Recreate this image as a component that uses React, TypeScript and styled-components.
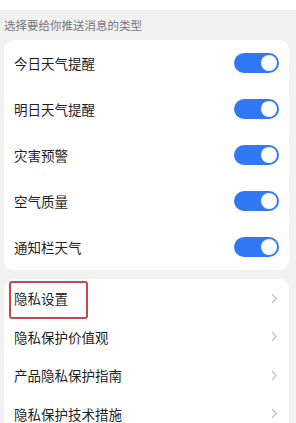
import React, { useState } from "react";
import styled, { createGlobalStyle } from "styled-components";

const GlobalStyle = createGlobalStyle`
  html, body {
    margin: 0;
    padding: 0;
    background: #f1f1f1;
    font-family: "Noto Sans CJK SC", "Noto Sans", sans-serif;
  }
`;

const Page = styled.div`
  min-height: 423px;
  background: #f1f1f1;
  overflow: hidden;
`;

const TopBar = styled.div`
  height: 10px;
  background: #fff;
`;

const SectionLabel = styled.div`
  height: 30px;
  display: flex;
  align-items: center;
  padding-left: 4px;
  font-size: 11.5px;
  color: #777;
`;

const Card = styled.div<{ gapTop?: number }>`
  margin: ${(p) => p.gapTop ?? 0}px 0 0 4px;
  width: 285px;
  background: #fff;
  border-radius: 10px;
  display: flex;
  flex-direction: column;
`;

const Row = styled.div<{ h: number }>`
  position: relative;
  height: ${(p) => p.h}px;
  display: flex;
  align-items: center;
  justify-content: space-between;
  padding: 0 10px;
  font-size: 13.5px;
  color: #1e1e1e;
`;

const Switch = styled.button<{ on: boolean }>`
  width: 45px;
  height: 20px;
  border: 0;
  padding: 0 2px;
  border-radius: 10px;
  background: ${(p) => (p.on ? "#3178f4" : "#cfcfcf")};
  display: flex;
  align-items: center;
  justify-content: ${(p) => (p.on ? "flex-end" : "flex-start")};
  cursor: pointer;
`;

const Knob = styled.span`
  width: 16.5px;
  height: 16.5px;
  border-radius: 50%;
  background: #fff;
`;

const Highlight = styled.div`
  position: absolute;
  left: 5px;
  top: 2px;
  width: 75px;
  height: 34px;
  border: 2px solid #c8474b;
  border-radius: 3px;
`;

const Chevron = () => (
  <svg width="6" height="11" viewBox="0 0 6 11" style={{ marginRight: 2 }}>
    <path d="M1 1 L5 5.5 L1 10" fill="none" stroke="#b3b3b3" strokeWidth="1.1" />
  </svg>
);

const pushTypes = ["今日天气提醒", "明日天气提醒", "灾害预警", "空气质量", "通知栏天气"];
const privacyLinks = ["隐私设置", "隐私保护价值观", "产品隐私保护指南", "隐私保护技术措施"];

export default function App() {
  const [on, setOn] = useState<boolean[]>(pushTypes.map(() => true));

  return (
    <Page>
      <GlobalStyle />
      <TopBar />
      <SectionLabel>选择要给你推送消息的类型</SectionLabel>
      <Card>
        {pushTypes.map((name, i) => (
          <Row key={name} h={46}>
            <span>{name}</span>
            <Switch
              on={on[i]}
              onClick={() => setOn(on.map((v, j) => (j === i ? !v : v)))}
            >
              <Knob />
            </Switch>
          </Row>
        ))}
      </Card>
      <Card gapTop={9}>
        {privacyLinks.map((name, i) => (
          <Row key={name} h={38.5}>
            {i === 0 && <Highlight />}
            <span>{name}</span>
            <Chevron />
          </Row>
        ))}
      </Card>
    </Page>
  );
}
